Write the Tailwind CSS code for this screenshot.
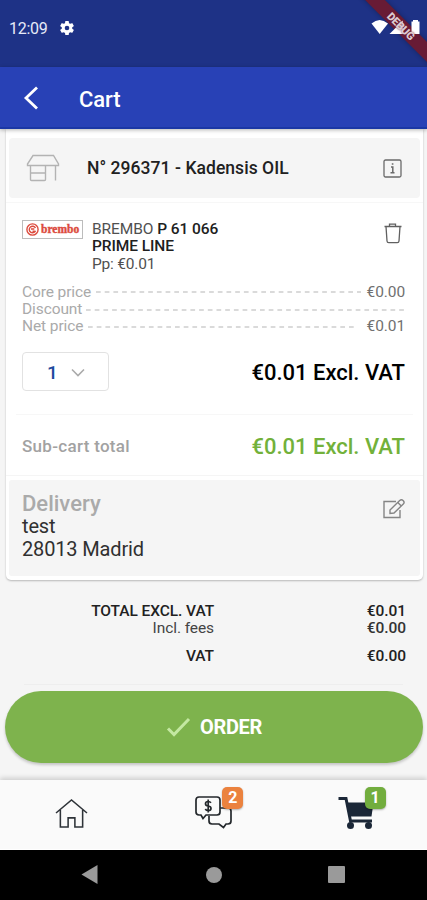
<!DOCTYPE html>
<html lang="en">
<head>
<meta charset="utf-8">
<meta name="viewport" content="width=device-width, initial-scale=1">
<title>Cart</title>
<script src="https://cdn.jsdelivr.net/npm/@tailwindcss/browser@4"></script>
</head>
<body class="bg-[#f5f5f5] font-[Roboto,sans-serif] text-[#212121]">
<div class="relative flex h-[900px] w-[427px] flex-col overflow-hidden">

  <!-- Status bar -->
  <header class="flex h-[67px] shrink-0 items-start justify-between bg-[#1e3286] pt-[18px] pr-[6px] pl-[9px] text-white">
    <div class="flex items-center gap-[12px]">
      <span class="mt-px text-[16px] leading-[20px] tracking-[-0.3px] text-[#e6eaf8]">12:09</span>
      <svg class="-mt-[2px] size-[16px]" viewBox="1 1 22 22" fill="#fff"><path d="M19.14 12.94c.04-.3.06-.61.06-.94s-.02-.64-.07-.94l2.03-1.58a.5.5 0 0 0 .12-.61l-1.92-3.32a.49.49 0 0 0-.59-.22l-2.39.96a7 7 0 0 0-1.62-.94l-.36-2.54A.48.48 0 0 0 13.920 2.400h-3.840a.48.48 0 0 0-.47.41l-.36 2.54c-.59.24-1.130.57-1.620.94l-2.390-.96a.48.48 0 0 0-.59.22L2.740 8.870a.47.47 0 0 0 .12.61l2.030 1.580c-.05.3-.09.63-.09.94s.02.64.07.94l-2.030 1.580a.5.5 0 0 0-.12.61l1.920 3.320c.12.22.37.29.59.22l2.390-.96c.5.38 1.030.7 1.620.94l.36 2.540c.05.24.24.41.48.41h3.840c.24 0 .44-.17.47-.41l.36-2.540c.59-.24 1.130-.56 1.620-.94l2.390.96c.22.08.47 0 .59-.22l1.920-3.320a.47.47 0 0 0-.12-.61zM12 15.200A3.200 3.200 0 1 1 12 8.800a3.200 3.200 0 0 1 0 6.400z"/></svg>
    </div>
    <svg class="relative z-20 mt-[1px] h-[17px] w-[50px]" viewBox="0 0 50 17" fill="#fff"><path d="M0.500 4.500Q8.500-2.500 17 4.500L8.700 15z"/><path d="M18.500 15L32 1.500V15z"/><path d="M40.500 2.500h1.500V1h5v1.500h1.500V15h-8z"/></svg>
  </header>

  <!-- Debug ribbon -->
  <div class="absolute top-[19px] left-[331px] z-10 flex h-[14px] w-[140px] rotate-45 items-center bg-[#6d1a30]/95 shadow-[0_0_5px_rgba(0,0,0,0.3)]"></div>
  <div class="absolute top-[19px] left-[381px] z-30 flex h-[14px] w-[40px] rotate-45 items-center justify-center"><span class="text-[11px] leading-none font-black tracking-[-0.3px] text-[#dccbd2] [text-shadow:0_0_2px_#6d1a30]">DEBUG</span></div>

  <!-- App bar -->
  <div class="z-[1] flex h-[62px] shrink-0 items-center border-b-2 border-[#1b37a5] bg-[#2841b6] pl-[23px] shadow-[0_1px_4px_rgba(0,0,0,0.3)]">
    <svg class="mt-[2px] h-[24px] w-[16px]" viewBox="0 0 16 24" fill="none" stroke="#fff" stroke-width="2.800"><path d="M14 1.500L3 12l11 10.500"/></svg>
    <h1 class="mt-[5px] ml-[40px] text-[22px] leading-none font-medium tracking-[-0.1px] text-white">Cart</h1>
  </div>

  <!-- Cart card -->
  <main class="mx-[6px] flex h-[451px] w-[417px] shrink-0 flex-col rounded-b-[5px] bg-white shadow-[0_1px_2px_rgba(0,0,0,0.25)]">
    <section class="mx-[3px] mt-[9px] flex h-[60px] shrink-0 items-center rounded-[4px] bg-[#f5f5f5] pr-[18px] pl-[17px]">
      <svg class="h-[28px] w-[34px]" viewBox="0 0 34 28" fill="none" stroke="#b3b3b3" stroke-width="1.400"><path d="M7 1.500h20.500L32.500 10v1.500h-31V10zM4.500 11.500V25.500q0 1 1 1h13q1 0 1-1v-14M4.500 19h15M29.500 11.500v15"/></svg>
      <h2 class="mt-[2px] ml-[27px] flex-1 text-[17.500px] leading-none font-medium tracking-[0.050px] whitespace-nowrap">N° 296371 - Kadensis OIL</h2>
      <svg class="size-[19px]" viewBox="0 0 19 19" fill="none" stroke="#6a6a6a" stroke-width="1.300"><rect x="1" y="1" width="17" height="17" rx="1.500"/><path d="M8 8h1.800v5.500M7.500 13.800h4M8.800 5h1.600" stroke-width="1.500"/></svg>
    </section>
    <div class="mt-[4px] h-px shrink-0 bg-[#f7f7f7]"></div>

    <section class="flex h-[72px] shrink-0 pt-[17px] pr-[20px] pl-[16px]">
      <div class="flex h-[19px] w-[61px] items-center border border-[#bcbcbc] pl-[3px]">
        <svg class="size-[13px] shrink-0" viewBox="0 0 13 13" fill="none" stroke="#dc4b3e" stroke-width="1.400"><circle cx="6.500" cy="6.500" r="5.600"/><path d="M9.500 5A3.300 3.300 0 1 0 9.600 7.800M5 6h3.300M6.500 8.300h2.200"/></svg>
        <span class="ml-[2px] font-['Liberation_Serif',serif] text-[11.500px] leading-none font-bold tracking-[0.020px] text-[#dc4b3e] [-webkit-text-stroke:0.400px_#dc4b3e]">brembo</span>
      </div>
      <div class="mt-[0.500px] ml-[9px] flex-1 text-[15.500px] leading-[17.500px] tracking-[-0.080px] text-[#505050]">
        <p>BREMBO <b class="font-medium text-[#202020]">P 61 066</b></p>
        <p class="font-medium text-[#202020]">PRIME LINE</p>
        <p class="tracking-[-0.200px]">Pp: €0.01</p>
      </div>
      <svg class="mt-[3px] h-[21px] w-[20px]" viewBox="0 0 20 21" fill="none" stroke="#606060" stroke-width="1.300"><path d="M1.500 3.500h17M6.500 3V1.200h6V3M3 3.500l1 14.500q.1 1.700 1.700 1.700h8.600q1.600 0 1.700-1.700L17 3.500"/></svg>
    </section>

    <section class="flex h-[65px] shrink-0 flex-col pt-[8.500px] pr-[18px] pl-[16px] text-[15.500px] leading-[17.400px] tracking-[-0.100px] text-[#aaa]">
      <div class="flex h-[17.400px] items-center"><span class="w-[64px] whitespace-nowrap">Core price</span><svg class="h-[2px] flex-1" preserveAspectRatio="none"><line x1="10" y1="1" x2="275" y2="1" stroke="#b5b5b5" stroke-width="1.200" stroke-dasharray="4.700 4"/></svg><span class="w-[40px] text-right text-[#707070]">€0.00</span></div>
      <div class="flex h-[17.400px] items-center"><span class="w-[62px]">Discount</span><svg class="h-[2px] flex-1" preserveAspectRatio="none"><line x1="2" y1="1" x2="321" y2="1" stroke="#b5b5b5" stroke-width="1.200" stroke-dasharray="4.700 4"/></svg></div>
      <div class="flex h-[17.400px] items-center"><span class="w-[64px]">Net price</span><svg class="h-[2px] flex-1" preserveAspectRatio="none"><line x1="2" y1="1" x2="269" y2="1" stroke="#b5b5b5" stroke-width="1.200" stroke-dasharray="4.700 4"/></svg><span class="w-[40px] text-right text-[#707070]">€0.01</span></div>
    </section>

    <section class="flex h-[74px] shrink-0 items-start justify-between pt-[12px] pr-[18px] pl-[16px]">
      <button class="flex h-[39px] w-[87px] items-center rounded-[4px] border border-[#e2e2e2] pl-[24px]"><span class="mt-px text-[19px] leading-none font-medium text-[#1e4a9e]">1</span><svg class="mt-px ml-[13px] h-[9px] w-[14px]" viewBox="0 0 14 9" fill="none" stroke="#aaa" stroke-width="1.600"><path d="M1 1.500l6 6 6-6"/></svg></button>
      <strong class="mt-[9px] text-[22px] leading-[24px] font-medium text-black">€0.01 Excl. VAT</strong>
    </section>
    <div class="mx-[10px] h-px shrink-0 bg-[#f7f7f7]"></div>

    <section class="flex h-[60px] shrink-0 items-center justify-between pt-[3px] pr-[18px] pl-[16px]">
      <span class="text-[17px] leading-none font-medium tracking-[0.300px] text-[#a2a2a2]">Sub-cart total</span>
      <strong class="text-[22px] leading-none font-medium text-[#72b13a]">€0.01 Excl. VAT</strong>
    </section>
    <div class="h-px shrink-0 bg-[#f5f5f5]"></div>

    <section class="mx-[3px] mt-[4px] flex h-[96px] shrink-0 justify-between rounded-[3px] bg-[#f5f5f5] pt-[11px] pr-[14px] pl-[13px]">
      <div><h3 class="text-[22px] leading-[25px] font-medium text-[#aaa]">Delivery</h3><p class="-mt-px text-[20px] leading-[22.500px] tracking-[-0.150px] text-[#303030]">test<br>28013 Madrid</p></div>
      <svg class="mt-[7px] h-[22px] w-[24px]" viewBox="0 0 24 22" fill="none" stroke="#858585" stroke-width="1.400"><path d="M14 3.500H2v16h16V12M8 15.500v-3.500l9.700-9.500q1.800-1.500 3.600.2 1.600 1.800 0 3.400L12 15zM15.800 4.500l3.500 3.500"/></svg>
    </section>
  </main>

  <!-- Totals -->
  <section class="grid h-[104px] shrink-0 grid-cols-[214px_192px] content-start pt-[22.500px] text-right text-[15.500px] leading-[17.500px] tracking-[-0.080px]">
    <span class="font-medium">TOTAL EXCL. VAT</span><span class="font-medium">€0.01</span>
    <span class="text-[#444]">Incl. fees</span><span class="font-medium text-[#333]">€0.00</span>
    <span class="mt-[10.500px] font-medium">VAT</span><span class="mt-[10.500px] font-medium">€0.00</span>
  </section>
  <div class="mx-[24px] h-px shrink-0 bg-[#eee]"></div>

  <button class="mt-[6px] ml-[5px] flex h-[72px] w-[418px] shrink-0 items-center justify-center rounded-full bg-[#7eb34d] shadow-[0_2px_3px_rgba(0,0,0,0.2)]">
    <svg class="h-[20px] w-[25px]" viewBox="0 0 25 20" fill="none" stroke="#c4e8a2" stroke-width="3"><path d="M2 11.500L8 17.500 23 2"/></svg>
    <span class="ml-[9px] text-[20px] leading-none font-bold tracking-[-0.300px] text-white">ORDER</span>
  </button>

  <!-- Bottom navigation -->
  <nav class="mt-[17px] grid h-[70px] shrink-0 grid-cols-3 border-b border-white bg-[#fafafa] shadow-[0_-2px_5px_rgba(0,0,0,0.17)]">
    <a class="flex justify-center pt-[18px]"><svg class="h-[31px] w-[33px]" viewBox="0 0 34 32" fill="none" stroke="#2e3338" stroke-width="1.600"><path d="M1 15.500L17 2l16 13.500M5.500 12.500V30h8V20.500h7V30h8V12.500"/></svg></a>
    <a class="relative flex justify-center pt-[15px]"><svg class="h-[34px] w-[40px]" viewBox="0 0 40 34" fill="none" stroke="#24282c" stroke-width="1.700"><path d="M6 2h18q3 0 3 3v12q0 3-3 3H13l-3 3.500-2-3.500H6q-3 0-3-3V5q0-3 3-3z"/><path d="M27 13h8q3 0 3 3v10q0 3-3 3h-2l-2.500 3.500L26 29H19q-3 0-3-3v-5"/><path d="M18 7.800q-1-1.300-2.700-1.300-2.800 0-2.800 2.200 0 2 2.800 2.300 2.700.4 2.700 2.500 0 2.100-2.800 2.100-2 0-2.900-1.600M15.200 4.500v13"/></svg>
      <span class="absolute top-[7px] left-[80px] flex h-[22px] w-[21px] items-center justify-center rounded-[5px] bg-[#eb823e] text-[16px] leading-none font-bold text-white shadow-[0_1px_2px_rgba(0,0,0,0.3)]">2</span></a>
    <a class="relative flex justify-center pt-[16px]"><svg class="h-[34px] w-[38px]" viewBox="0 0 38 34"><path d="M1.500 2.500H9l4.500 22.500H35" fill="none" stroke="#1b2737" stroke-width="3"/><path d="M9.500 6.500H36.500l-2 14H12.500z" fill="#1b2737"/><circle cx="13.500" cy="29.500" r="3.500" fill="#1b2737"/><circle cx="31.500" cy="29.500" r="3.500" fill="#1b2737"/></svg>
      <span class="absolute top-[7px] left-[80px] flex h-[22px] w-[21px] items-center justify-center rounded-[5px] bg-[#72ad3e] text-[16px] leading-none font-bold text-white shadow-[0_1px_2px_rgba(0,0,0,0.3)]">1</span></a>
  </nav>

  <!-- System navigation -->
  <footer class="flex flex-1 items-center bg-black pl-[81px]">
    <svg class="-mt-px h-[19px] w-[17px]" viewBox="0 0 17 19" fill="#9a9a9a"><path d="M.5 9.500L16.500 0v19z"/></svg>
    <span class="-mt-px ml-[108px] size-[16px] rounded-full bg-[#9a9a9a]"></span>
    <span class="-mt-px ml-[106px] size-[17px] rounded-[1px] bg-[#9a9a9a]"></span>
  </footer>
</div>
</body>
</html>
